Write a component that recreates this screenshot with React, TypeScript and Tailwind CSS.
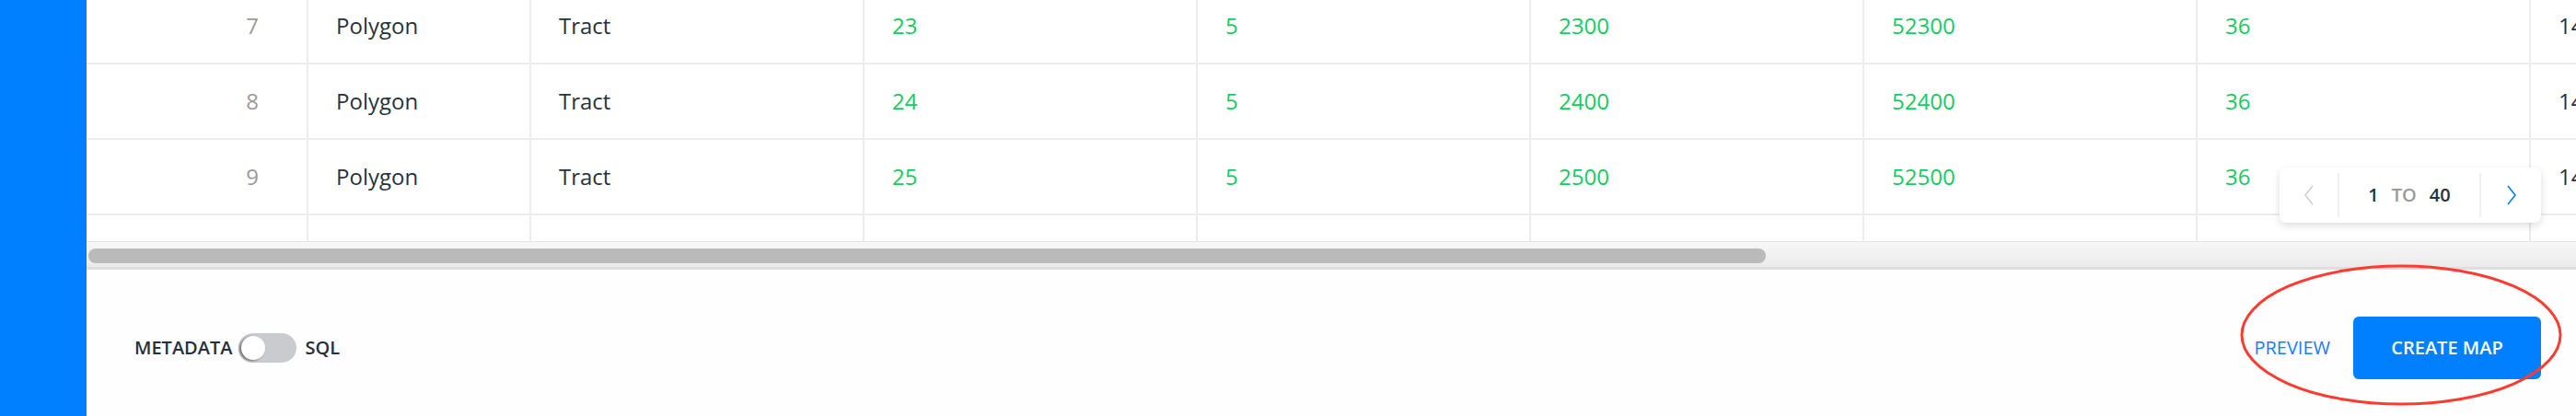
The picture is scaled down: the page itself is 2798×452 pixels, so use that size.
import { useState } from "react";

const rows = [
  { id: 7, geom: "Polygon", level: "Tract", a: "23", b: "5", c: "2300", d: "52300", e: "36", f: "1400" },
  { id: 8, geom: "Polygon", level: "Tract", a: "24", b: "5", c: "2400", d: "52400", e: "36", f: "1400" },
  { id: 9, geom: "Polygon", level: "Tract", a: "25", b: "5", c: "2500", d: "52500", e: "36", f: "1400" },
  { id: 10, geom: "Polygon", level: "Tract", a: "26", b: "5", c: "2600", d: "52600", e: "36", f: "1400" },
];

function Cell({ w, children, className = "" }: { w: string; children?: React.ReactNode; className?: string }) {
  return (
    <div className={`flex items-center shrink-0 h-full border-r-2 border-[#ececec] ${w} ${className}`}>
      {children}
    </div>
  );
}

export default function App() {
  const [sql, setSql] = useState(false);

  return (
    <div className="relative flex w-[2798px] h-[452px] overflow-hidden bg-white font-['Open_Sans',sans-serif]">
      <div className="w-[94px] shrink-0 bg-[#0080ff]" />

      <div className="relative flex flex-col flex-1 min-w-0">
        {/* table */}
        <div className="relative h-[262px] overflow-hidden">
          <div className="-mt-[12px] flex flex-col">
            {rows.map((r) => (
              <div key={r.id} className="flex h-[82px] shrink-0 border-b-2 border-[#ececec] text-[24px] text-[#27333c]">
                <Cell w="w-[241px]" className="justify-end pr-[52px] text-[#9a9a9a]">{r.id}</Cell>
                <Cell w="w-[242px]" className="pl-[30px]">{r.geom}</Cell>
                <Cell w="w-[362px]" className="pl-[30px]">{r.level}</Cell>
                <Cell w="w-[362px]" className="pl-[30px] text-[#14cc62]">{r.a}</Cell>
                <Cell w="w-[362px]" className="pl-[30px] text-[#14cc62]">{r.b}</Cell>
                <Cell w="w-[362px]" className="pl-[30px] text-[#14cc62]">{r.c}</Cell>
                <Cell w="w-[362px]" className="pl-[30px] text-[#14cc62]">{r.d}</Cell>
                <Cell w="w-[362px]" className="pl-[30px] text-[#14cc62]">{r.e}</Cell>
                <Cell w="w-[362px]" className="pl-[30px]">{r.f}</Cell>
              </div>
            ))}
          </div>

          {/* pagination */}
          <div className="absolute top-[182px] right-[38px] flex items-center w-[284px] h-[60px] bg-white rounded-[7px] shadow-[0_3px_8px_rgba(0,0,0,0.14)]">
            <button className="flex items-center justify-center w-[65px] h-[48px] border-r-2 border-[#f1f1f1]">
              <svg width="12" height="24" viewBox="0 0 12 24" fill="none" stroke="#cfcfcf" strokeWidth="1.6">
                <polyline points="10,2 2,12 10,22" />
              </svg>
            </button>
            <div className="flex flex-1 items-center justify-center gap-[14px] h-[48px] border-r-2 border-[#f1f1f1] text-[20px] font-semibold text-[#27333c]">
              <span>1</span>
              <span className="text-[#9a9a9a]">TO</span>
              <span>40</span>
            </div>
            <button className="flex items-center justify-center w-[65px] h-[48px]">
              <svg width="12" height="24" viewBox="0 0 12 24" fill="none" stroke="#0080ff" strokeWidth="1.6">
                <polyline points="2,2 10,12 2,22" />
              </svg>
            </button>
          </div>
        </div>

        {/* horizontal scrollbar */}
        <div className="h-[31px] shrink-0 border-t border-[#e3e3e3] border-b-[3px] border-b-[#dedede] bg-gradient-to-b from-[#f7f7f7] to-[#ebebeb] pt-[7px] pl-[2px]">
          <div className="h-[16px] w-[1822px] rounded-full bg-[#bababa]" />
        </div>

        {/* footer */}
        <div className="flex flex-1 items-center justify-between bg-[#fefefe] pt-[11px] pl-[52px] pr-[38px]">
          <div className="flex items-center text-[20px] font-semibold text-[#24313a]">
            <span>METADATA</span>
            <button
              onClick={() => setSql(!sql)}
              className={`relative ml-[6px] mr-[10px] w-[63px] h-[32px] rounded-full ${sql ? "bg-[#0080ff]" : "bg-[#c9cbce]"}`}
            >
              <span
                className={`absolute top-[3px] w-[26px] h-[26px] rounded-full bg-white shadow-[-2px_1px_3px_rgba(0,0,0,0.45)] ${sql ? "left-[34px]" : "left-[3px]"}`}
              />
            </button>
            <span>SQL</span>
          </div>

          <div className="flex items-center gap-[25px]">
            <button className="text-[20px] text-[#1a7cf5]">PREVIEW</button>
            <button className="w-[204px] h-[68px] rounded-[6px] bg-[#0080ff] text-[20px] font-semibold text-white">
              CREATE MAP
            </button>
          </div>
        </div>
      </div>

      {/* annotation */}
      <svg className="absolute left-[2432px] top-[286px] pointer-events-none" width="352" height="156" viewBox="0 0 352 156">
        <ellipse cx="176" cy="78" rx="173" ry="75" fill="none" stroke="#ff3b30" strokeWidth="3" />
      </svg>
    </div>
  );
}
